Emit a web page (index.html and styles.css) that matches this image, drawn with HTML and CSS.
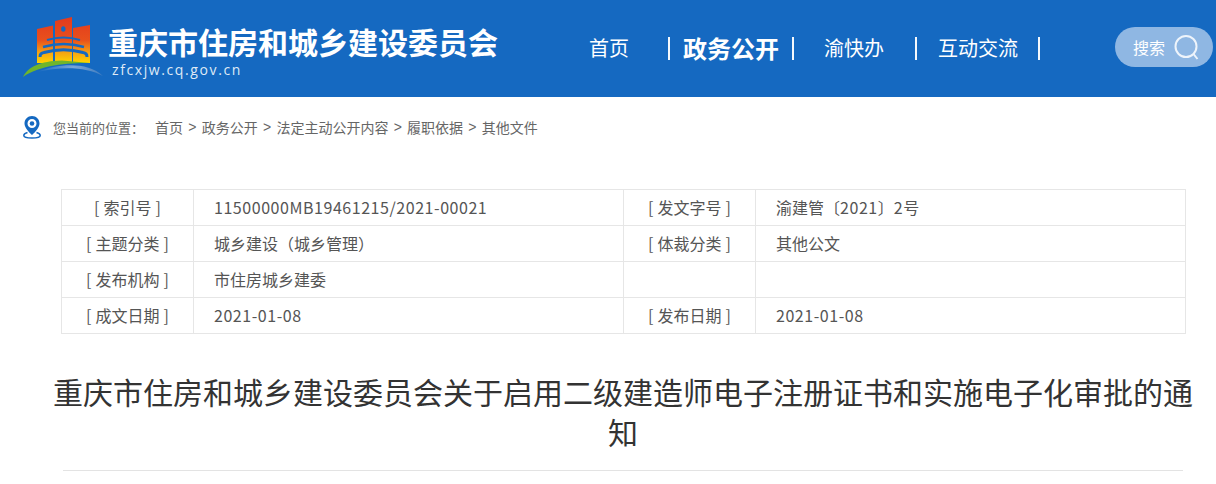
FILE: index.html
```html
<!DOCTYPE html>
<html lang="zh-CN">
<head>
<meta charset="utf-8">
<title>重庆市住房和城乡建设委员会</title>
<link rel="stylesheet" href="styles.css">
</head>
<body>
<header class="header">
  <svg class="logo" width="82" height="64" viewBox="0 0 82 64">
    <defs>
      <linearGradient id="tower" gradientUnits="userSpaceOnUse" x1="0" y1="0" x2="0" y2="46">
        <stop offset="0" stop-color="#e23a1e"/>
        <stop offset="0.5" stop-color="#e8501c"/>
        <stop offset="0.78" stop-color="#f6a512"/>
        <stop offset="1" stop-color="#ffd400"/>
      </linearGradient>
      <linearGradient id="arc" x1="0" y1="0" x2="1" y2="0">
        <stop offset="0" stop-color="#1569c1"/>
        <stop offset="0.55" stop-color="#7aa6d8"/>
        <stop offset="1" stop-color="#3d7bbf"/>
      </linearGradient>
    </defs>
    <path fill="url(#tower)" d="M15 12 31 8.500V46H15Z"/>
    <path fill="url(#tower)" d="M33 4 50 0V46H33Z"/>
    <path fill="url(#tower)" d="M51 11 68 8V46H51Z"/>
    <ellipse cx="41.300" cy="12" rx="2.200" ry="2.800" fill="#1569c1"/>
    <g fill="none" stroke="#1569c1">
      <path stroke-width="2" d="M25 23Q41.500 18 58 23"/>
      <path stroke-width="2.400" d="M21 30Q41.500 24 62 30"/>
      <path stroke-width="3" d="M18 40Q18 36 22 35.500Q41.500 30 61 35.500Q65 36 65 40"/>
    </g>
    <path fill="#6fb52c" d="M1 60C6 50 18 44 40 43.500L68 46C45 46 18 48 1 60Z"/>
    <path fill="url(#arc)" d="M15 55C35 47 65 44 81 59C65 50 40 49 15 55Z"/>
  </svg>
  <div class="brand">
    <div class="brand-name">重庆市住房和城乡建设委员会</div>
    <div class="brand-url">zfcxjw.cq.gov.cn</div>
  </div>
  <nav class="nav">
    <a class="nav-item nav-home">首页</a>
    <i class="nav-sep sep-a"></i>
    <a class="nav-item nav-current">政务公开</a>
    <i class="nav-sep"></i>
    <a class="nav-item nav-yu">渝快办</a>
    <i class="nav-sep"></i>
    <a class="nav-item nav-hd">互动交流</a>
    <i class="nav-sep"></i>
  </nav>
  <div class="search">
    <span>搜索</span>
    <svg width="26" height="26" viewBox="0 0 26 26" fill="none" stroke="#eef4fb" stroke-width="2">
      <circle cx="13" cy="12.500" r="10.500"/>
      <path d="M20.500 20 24.500 25"/>
    </svg>
  </div>
</header>

<div class="crumbs">
  <svg class="pin" width="20" height="24" viewBox="0 0 20 24">
    <path fill="#1569c1" fill-rule="evenodd" d="M10 1C5.700 1 2.500 4.300 2.500 8.500 2.500 12.500 6.500 16.800 10 20 13.500 16.800 17.500 12.500 17.500 8.500 17.500 4.300 14.300 1 10 1ZM10 4A4.500 4.500 0 1 1 10 13 4.500 4.500 0 0 1 10 4Z"/>
    <circle cx="10" cy="8.500" r="2.300" fill="#1569c1"/>
    <path fill="none" stroke="#1569c1" stroke-width="1.500" d="M5.500 17.500C3 18.300 1.800 19.400 1.800 20.500 1.800 22 5.500 23 10 23S18.200 22 18.200 20.500C18.200 19.400 17 18.300 14.500 17.500"/>
  </svg>
  <span class="crumb-lead">您当前的位置：</span>
  <a>首页</a><b>&gt;</b><a>政务公开</a><b>&gt;</b><a>法定主动公开内容</a><b>&gt;</b><a>履职依据</a><b>&gt;</b><a>其他文件</a>
</div>

<main class="article">
  <table class="meta">
    <tr>
      <th>[ 索引号 ]</th><td><span class="num">11500000MB19461215/2021-00021</span></td>
      <th>[ 发文字号 ]</th><td>渝建管〔<span class="num">2021</span>〕<span class="num">2</span>号</td>
    </tr>
    <tr>
      <th>[ 主题分类 ]</th><td>城乡建设（城乡管理）</td>
      <th>[ 体裁分类 ]</th><td>其他公文</td>
    </tr>
    <tr>
      <th>[ 发布机构 ]</th><td>市住房城乡建委</td>
      <th></th><td></td>
    </tr>
    <tr>
      <th>[ 成文日期 ]</th><td><span class="num">2021-01-08</span></td>
      <th>[ 发布日期 ]</th><td><span class="num">2021-01-08</span></td>
    </tr>
  </table>
  <h1 class="title">重庆市住房和城乡建设委员会关于启用二级建造师电子注册证书和实施电子化审批的通知</h1>
  <hr class="rule">
</main>
</body>
</html>
```
FILE: styles.css
```css
* { box-sizing: border-box; }
html, body { margin: 0; padding: 0; }
body {
  height: 484px;
  overflow: hidden;
  background: #fff;
  color: #555;
  font-family: "Noto Sans CJK SC", "Liberation Sans", sans-serif;
}

.header {
  display: flex;
  align-items: flex-start;
  height: 97px;
  background: #1569c1;
  color: #fff;
}
.logo { flex: none; margin: 17px 0 0 22px; }
.brand { flex: none; width: 391px; margin-left: 4px; }
.brand-name {
  margin-top: 23px;
  font-size: 30px;
  line-height: 36px;
  font-weight: 700;
  white-space: nowrap;
}
.brand-url {
  margin: 1px 0 0 4px;
  font-family: "Open Sans", sans-serif;
  font-size: 14px;
  line-height: 19px;
  letter-spacing: 1.600px;
  color: #dfeaf6;
}

.nav {
  flex: none;
  display: flex;
  align-items: center;
  height: 96px;
  margin-left: 90px;
}
.nav-item { font-size: 20px; line-height: 28px; white-space: nowrap; }
.nav-current { font-size: 24px; font-weight: 700; margin: 0 13px; }
.nav-sep { display: block; width: 2px; height: 23px; background: #f4f8fc; }
.sep-a { margin-left: 39px; }
.nav-yu { margin: 0 31px 0 30px; }
.nav-hd { margin: 0 20px 0 21px; }

.search {
  flex: none;
  display: flex;
  align-items: center;
  gap: 8px;
  width: 98px;
  height: 40px;
  margin: 27px 0 0 75px;
  padding-left: 18px;
  border-radius: 20px;
  background: #8fb7e3;
  color: #fff;
  font-size: 16px;
}

.crumbs {
  display: flex;
  align-items: center;
  height: 48px;
  padding-left: 22px;
  margin-top: 6px;
  font-size: 14px;
  color: #666;
}
.pin { flex: none; margin-right: 11px; }
.crumb-lead { font-size: 13px; margin-right: 11px; }
.crumbs b { font-weight: 400; margin: 0 5.250px; font-family: "Liberation Sans", sans-serif; }

.article { padding-top: 38px; }
.meta {
  width: 1125px;
  margin-left: 61px;
  border-collapse: collapse;
  table-layout: fixed;
  font-size: 16px;
}
.meta th, .meta td {
  height: 36px;
  padding: 0 0 2px;
  border: 1px solid #e6e6e6;
  font-weight: 400;
  white-space: nowrap;
}
.meta th { width: 132px; text-align: center; word-spacing: 0.500px; }
.meta td { padding-left: 20px; }
.num { letter-spacing: 0.550px; }

.title {
  margin: 37px 18px 0 48px;
  font-size: 30px;
  line-height: 40px;
  font-weight: 400;
  color: #333;
  text-align: center;
}
.rule {
  height: 1px;
  margin: 19px 33px 0 63px;
  border: 0;
  background: #e3e3e3;
}
```
